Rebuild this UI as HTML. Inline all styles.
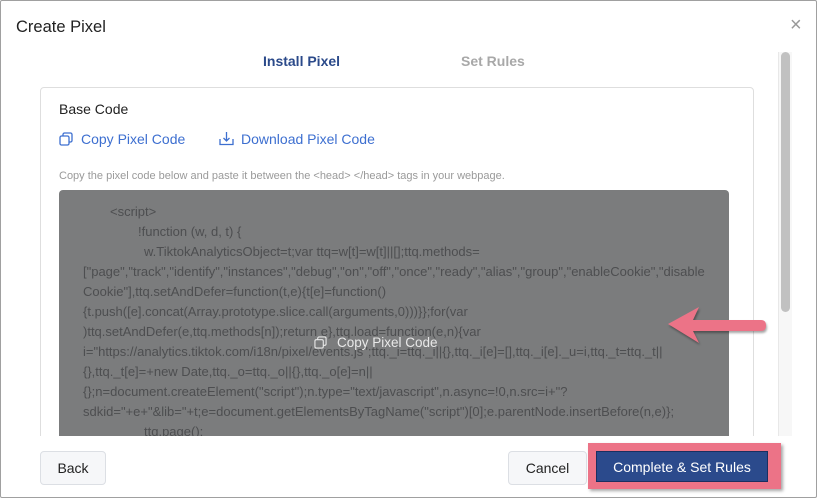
<!DOCTYPE html>
<html><head><style>
*{margin:0;padding:0;box-sizing:border-box}
body{width:817px;height:498px;overflow:hidden;background:#fff;font-family:"Liberation Sans",sans-serif;position:relative}
.frame{position:absolute;left:0;top:0;width:817px;height:498px;border:1px solid #a0a0a0;border-radius:2px}
.abs{position:absolute}
.code{position:absolute;left:59px;top:190px;width:670px;height:246px;background:#7b7c7d;border-radius:4px 4px 0 0;overflow:hidden;color:#4d4e50;font-size:13px;line-height:20px;padding:12px 10px 0 24px;letter-spacing:0}
.code div{white-space:nowrap}
.btn{position:absolute;border:1px solid #dcdfe4;background:#f6f7f9;border-radius:4px;font-size:14px;color:#222;text-align:center}
</style></head><body>
<div class="frame"></div>
<div class="abs" style="left:16px;top:18px;font-size:16.5px;color:#222">Create Pixel</div>
<div class="abs" style="left:790px;top:15px;font-size:20px;color:#999;line-height:20px">×</div>
<div class="abs" style="left:263px;top:53px;font-size:14px;color:#2b4a8a;font-weight:bold">Install Pixel</div>
<div class="abs" style="left:461px;top:53px;font-size:14px;color:#a8a8a8;font-weight:bold">Set Rules</div>
<div class="abs" style="left:778px;top:52px;width:14px;height:384px;background:#f7f7f7;border-left:1px solid #e8e8e8"></div>
<div class="abs" style="left:781px;top:52px;width:9px;height:260px;background:#c1c1c1;border-radius:5px"></div>
<div class="abs" style="left:40px;top:87px;width:714px;height:349px;overflow:hidden"><div style="width:714px;height:400px;border:1px solid #dedede;border-radius:4px"></div></div>
<div class="abs" style="left:59px;top:101px;font-size:14px;color:#222">Base Code</div>
<svg class="abs" style="left:59px;top:132px" width="14" height="14" viewBox="0 0 14 14" fill="none" stroke="#3d6fd0" stroke-width="1.3"><rect x="1" y="4" width="9" height="9" rx="1.5"/><path d="M4 4V2.5A1.5 1.5 0 0 1 5.5 1H11.5A1.5 1.5 0 0 1 13 2.5V8.5A1.5 1.5 0 0 1 11.5 10H10"/></svg>
<div class="abs" style="left:81px;top:131px;font-size:14px;color:#3d6fd0">Copy Pixel Code</div>
<svg class="abs" style="left:219px;top:131px" width="15" height="15" viewBox="0 0 15 15" fill="none" stroke="#3d6fd0" stroke-width="1.3"><path d="M1 8v5.5h13V8M7.5 1v9M4.5 7l3 3 3-3"/></svg>
<div class="abs" style="left:241px;top:131px;font-size:14px;color:#3d6fd0">Download Pixel Code</div>
<div class="abs" style="left:59px;top:170px;font-size:11px;color:#9a9a9a">Copy the pixel code below and paste it between the &lt;head&gt; &lt;/head&gt; tags in your webpage.</div>
<div class="code">
<div style="padding-left:27px">&lt;script&gt;</div>
<div style="padding-left:55px">!function (w, d, t) {</div>
<div style="padding-left:61px">w.TiktokAnalyticsObject=t;var ttq=w[t]=w[t]||[];ttq.methods=</div>
<div>["page","track","identify","instances","debug","on","off","once","ready","alias","group","enableCookie","disable</div>
<div>Cookie"],ttq.setAndDefer=function(t,e){t[e]=function()</div>
<div>{t.push([e].concat(Array.prototype.slice.call(arguments,0)))}};for(var</div>
<div>)ttq.setAndDefer(e,ttq.methods[n]);return e},ttq.load=function(e,n){var</div>
<div>i="https://analytics.tiktok.com/i18n/pixel/events.js";ttq._i=ttq._i||{},ttq._i[e]=[],ttq._i[e]._u=i,ttq._t=ttq._t||</div>
<div>{},ttq._t[e]=+new Date,ttq._o=ttq._o||{},ttq._o[e]=n||</div>
<div>{};n=document.createElement("script");n.type="text/javascript",n.async=!0,n.src=i+"?</div>
<div>sdkid="+e+"&amp;lib="+t;e=document.getElementsByTagName("script")[0];e.parentNode.insertBefore(n,e)};</div>
<div style="padding-left:61px">ttq.page();</div>
</div>
<svg class="abs" style="left:314px;top:336px" width="13" height="13" viewBox="0 0 14 14" fill="none" stroke="#e8e8e8" stroke-width="1.2"><rect x="1" y="4" width="9" height="9" rx="1.5"/><path d="M4 4V2.5A1.5 1.5 0 0 1 5.5 1H11.5A1.5 1.5 0 0 1 13 2.5V8.5A1.5 1.5 0 0 1 11.5 10H10"/></svg>
<div class="abs" style="left:337px;top:335px;font-size:13.5px;color:#e8e8e8">Copy Pixel Code</div>
<svg class="abs" style="left:660px;top:300px" width="115" height="50" viewBox="660 300 115 50"><g style="filter:drop-shadow(1px 2px 1px rgba(0,0,0,.35))"><path d="M668 324 L699 307 L693 320 L761 320 Q766 320 766 325.5 Q766 331 761 331 L693 331 L699 343 Z" fill="#ec7387"/></g></svg>
<div class="btn" style="left:40px;top:451px;width:66px;height:34px;line-height:32px">Back</div>
<div class="btn" style="left:508px;top:451px;width:79px;height:34px;line-height:32px">Cancel</div>
<div class="abs" style="left:588px;top:443px;width:193px;height:46px;background:#ec7387;box-shadow:2px 2px 3px rgba(0,0,0,.35)"></div>
<div class="abs" style="left:596px;top:451px;width:172px;height:31px;background:#2b4a8c;color:#fff;font-size:14px;text-align:center;line-height:31px;border:1px solid #1a2f60">Complete &amp; Set Rules</div>
</body></html>
